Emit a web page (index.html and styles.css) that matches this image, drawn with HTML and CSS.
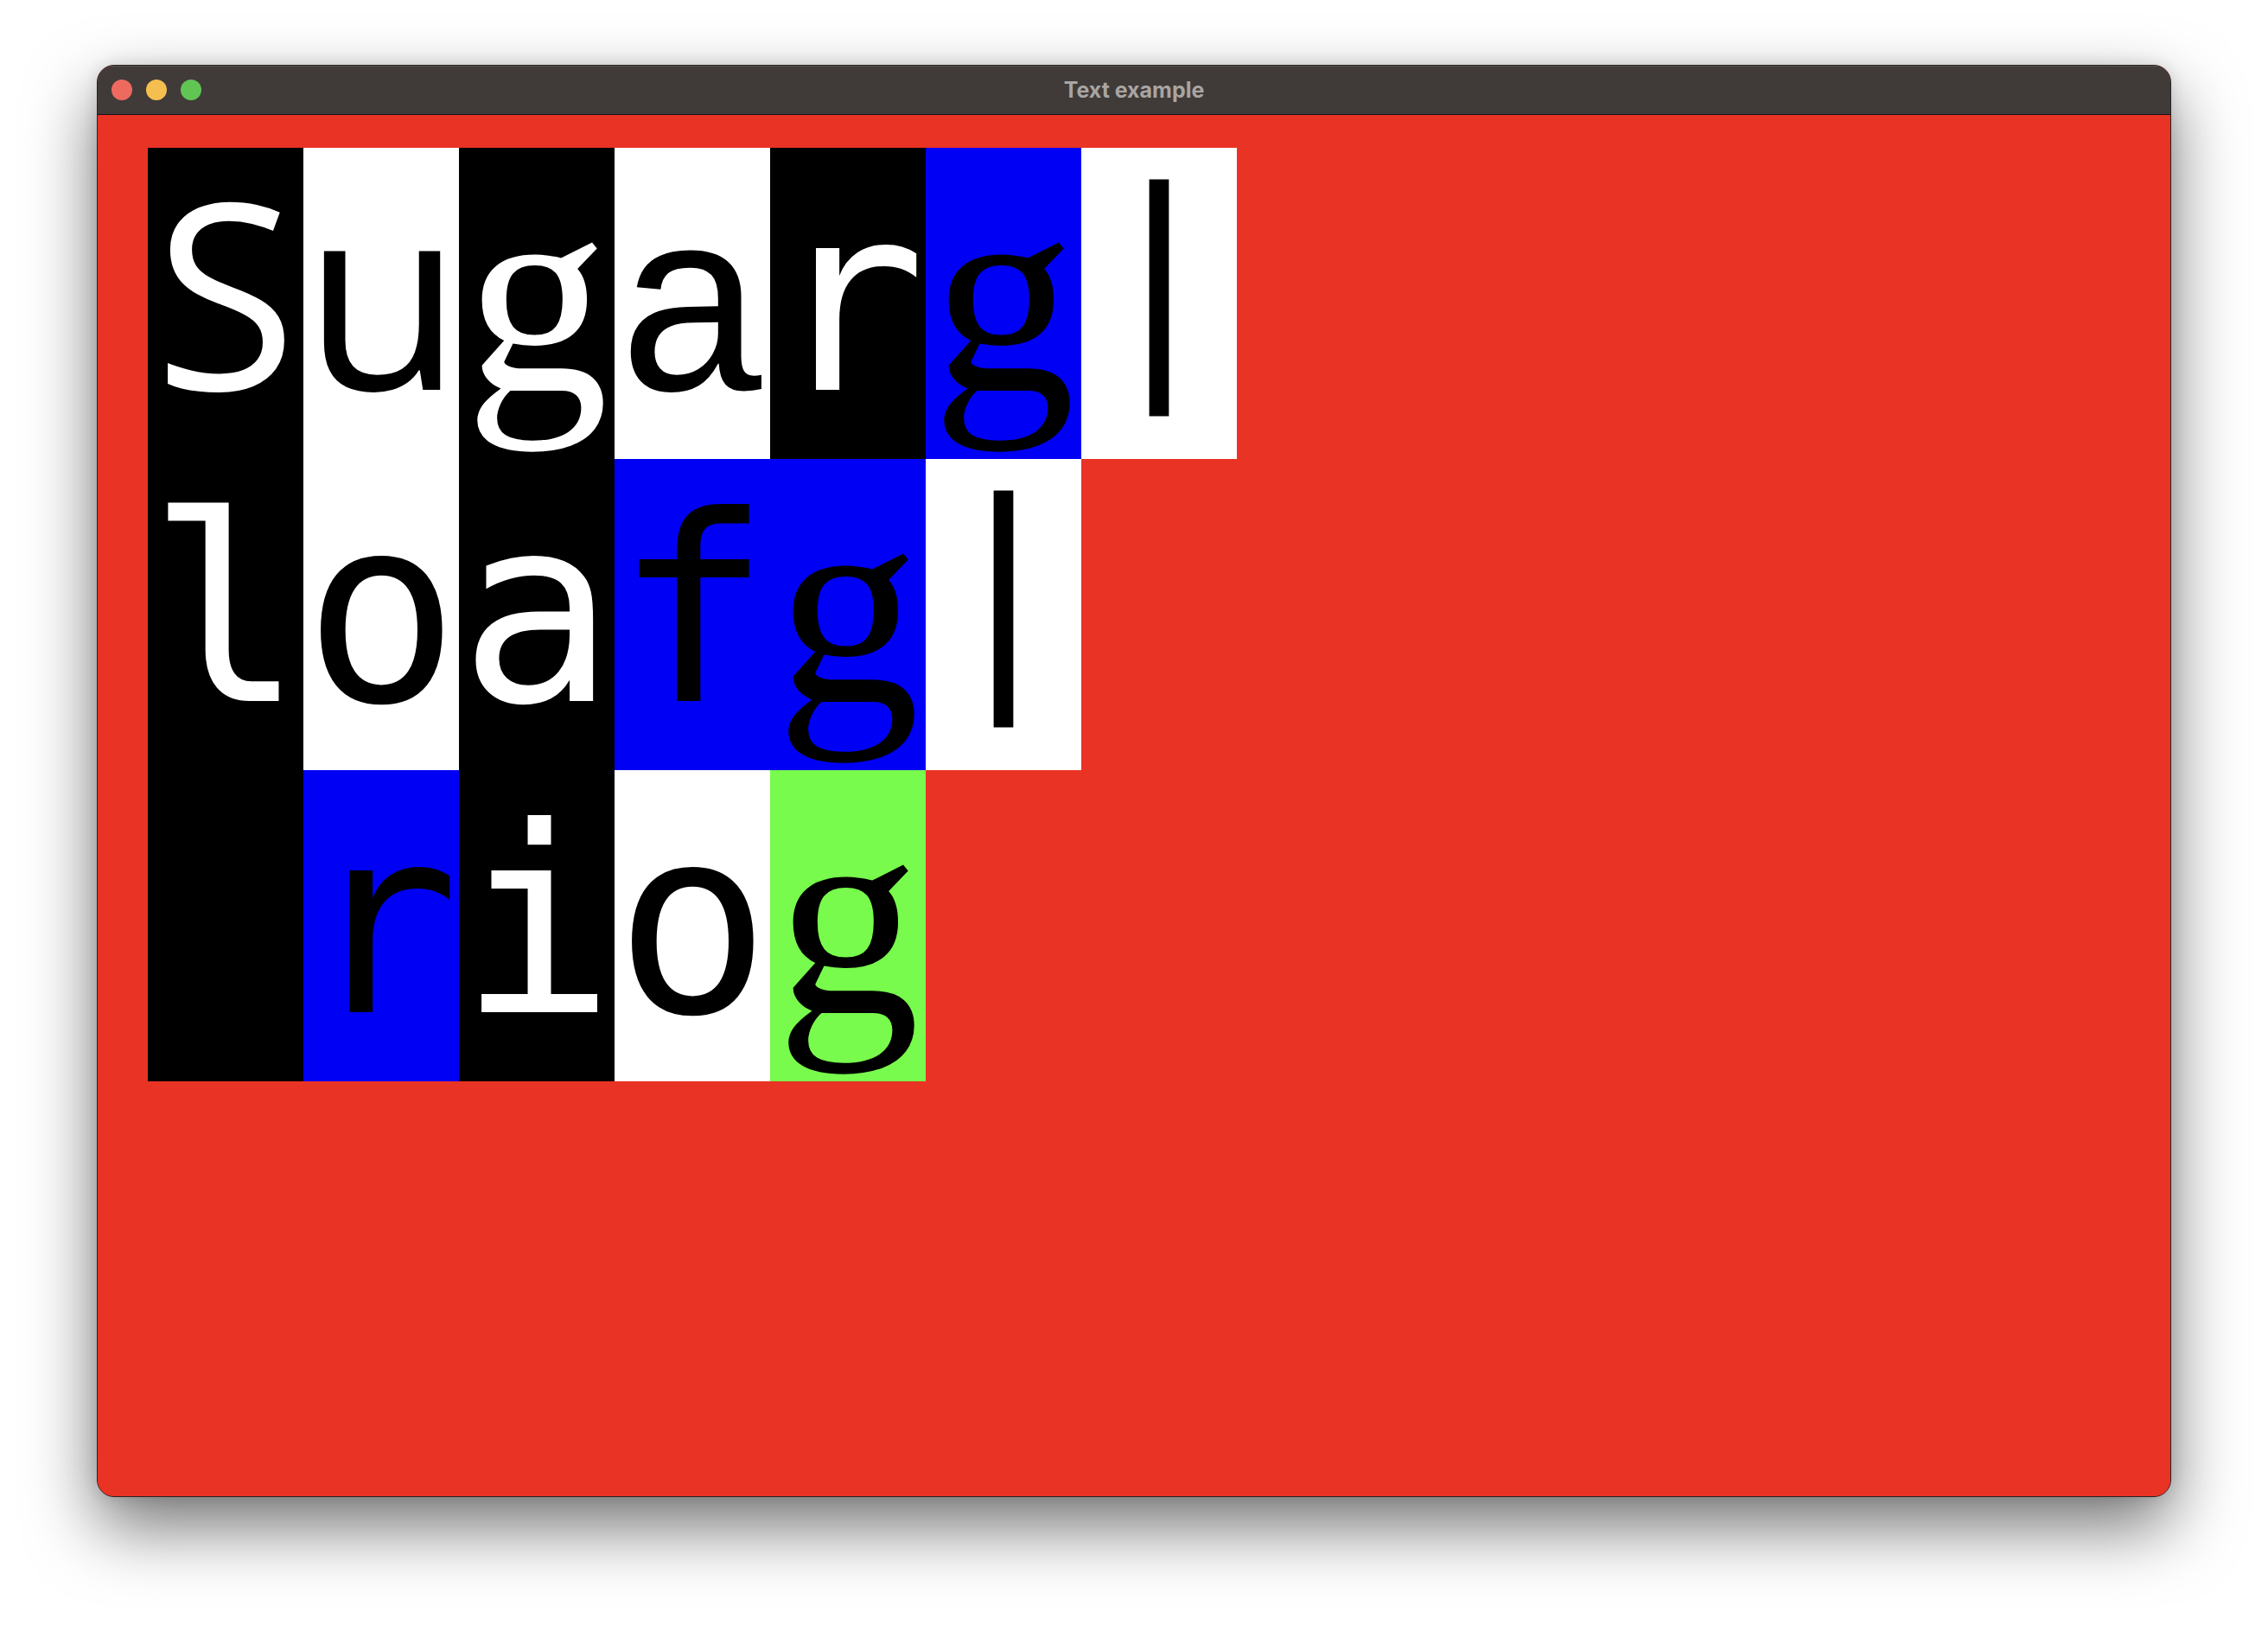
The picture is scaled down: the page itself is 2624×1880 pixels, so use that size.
FILE: index.html
```html
<!DOCTYPE html>
<html lang="en">
<head>
<meta charset="utf-8">
<title>Text example</title>
<link rel="stylesheet" href="styles.css">
</head>
<body>
<div class="window">
  <div class="titlebar">
    <div class="lights">
      <span class="light red"></span>
      <span class="light yellow"></span>
      <span class="light green"></span>
    </div>
    <div class="title">Text example</div>
  </div>
  <div class="content">
    <div class="lines">
      <div class="line">
        <span class="cell on-black"><span class="g-sans">S</span></span>
        <span class="cell on-white"><span class="g-sans">u</span></span>
        <span class="cell on-black"><span class="g-serif">g</span></span>
        <span class="cell on-white"><span class="g-lmono">a</span></span>
        <span class="cell on-black"><span class="g-mono">r</span></span>
        <span class="cell on-blue"><span class="g-serif">g</span></span>
        <span class="cell on-white"><span class="g-bar">|</span></span>
      </div>
      <div class="line">
        <span class="cell on-black"><span class="g-mono">l</span></span>
        <span class="cell on-white"><span class="g-mono">o</span></span>
        <span class="cell on-black"><span class="g-mono">a</span></span>
        <span class="cell on-blue"><span class="g-mono">f</span></span>
        <span class="cell on-blue"><span class="g-serif">g</span></span>
        <span class="cell on-white"><span class="g-bar">|</span></span>
      </div>
      <div class="line">
        <span class="cell on-black"></span>
        <span class="cell on-blue"><span class="g-mono">r</span></span>
        <span class="cell on-black"><span class="g-mono">i</span></span>
        <span class="cell on-white"><span class="g-mono">o</span></span>
        <span class="cell on-green"><span class="g-serif">g</span></span>
      </div>
    </div>
  </div>
</div>
</body>
</html>
```

FILE: styles.css
```css
html, body {
  margin: 0;
  padding: 0;
  background: #ffffff;
}

body {
  padding: 75px 0 0 112px;
  width: 2624px;
  height: 1880px;
  box-sizing: border-box;
  overflow: hidden;
  font-family: "Liberation Sans", sans-serif;
}

.window {
  width: 2400px;
  height: 1657px;
  box-sizing: border-box;
  border: 1px solid #262322;
  border-radius: 20px;
  overflow: hidden;
  background: #e93324;
  box-shadow: 0 34px 80px rgba(0, 0, 0, 0.55), 0 0 18px rgba(0, 0, 0, 0.12);
  display: flex;
  flex-direction: column;
}

.titlebar {
  height: 56px;
  flex: 0 0 56px;
  background: #403b39;
  border-bottom: 1px solid #161414;
  box-shadow: inset 0 1px 0 rgba(255, 255, 255, 0.12);
  display: flex;
  align-items: center;
  position: relative;
}

.lights {
  display: flex;
  gap: 16px;
  padding-left: 16px;
}

.light {
  width: 24px;
  height: 24px;
  border-radius: 50%;
  display: block;
}

.light.red { background: #ee6a5f; }
.light.yellow { background: #f5bf4f; }
.light.green { background: #61c554; }

.title {
  position: absolute;
  left: 0;
  right: 0;
  top: 0;
  bottom: 0;
  display: flex;
  align-items: center;
  justify-content: center;
  color: #a9a5a3;
  font-family: "Inter", "Liberation Sans", sans-serif;
  font-weight: 700;
  font-size: 25px;
  pointer-events: none;
}

.content {
  flex: 1 1 auto;
  background: #e93324;
  padding: 38px 0 0 58px;
}

.lines {
  display: flex;
  flex-direction: column;
}

.line {
  display: flex;
}

.cell {
  display: block;
  width: 180px;
  height: 360px;
  text-align: center;
  font-family: "DejaVu Sans Mono", monospace;
  font-size: 300px;
  line-height: 354px;
  white-space: pre;
}

.cell > span {
  line-height: 200px;
}

.on-black { background: #000000; color: #ffffff; }
.on-white { background: #ffffff; color: #000000; }
.on-blue { background: #0000f5; color: #000000; }
.on-green { background: #78fb4c; color: #000000; }

.g-sans { font-family: "Open Sans", sans-serif; }
.g-serif {
  font-family: "Liberation Serif", serif;
  font-size: 332px;
}
.g-mono { font-family: "DejaVu Sans Mono", monospace; }
.g-lmono { font-family: "Liberation Mono", monospace; }
.g-bar {
  font-family: "DejaVu Sans", sans-serif;
  font-size: 274px;
  vertical-align: 34px;
}
```
